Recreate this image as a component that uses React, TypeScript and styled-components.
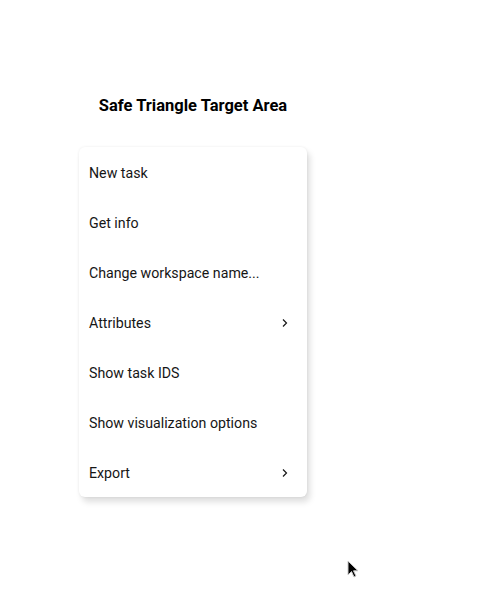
import styled, { createGlobalStyle } from 'styled-components';

const GlobalStyle = createGlobalStyle`
  html, body {
    margin: 0;
    padding: 0;
    background: #ffffff;
  }
  body {
    font-family: Roboto, 'Noto Sans', sans-serif;
    color: #161616;
  }
`;

const items = [
  { label: 'New task' },
  { label: 'Get info' },
  { label: 'Change workspace name...' },
  { label: 'Attributes', sub: true },
  { label: 'Show task IDS' },
  { label: 'Show visualization options' },
  { label: 'Export', sub: true },
];

const Page = styled.div`
  position: relative;
  width: 500px;
  height: 602px;
  padding: 95px 0 0 79px;
  box-sizing: border-box;
  overflow: hidden;
`;

const Column = styled.div`
  width: 228px;
  display: flex;
  flex-direction: column;
  align-items: center;
`;

const Title = styled.h1`
  margin: 0;
  font-size: 16.5px;
  line-height: 22px;
  font-weight: 700;
  color: #000;
  white-space: nowrap;
`;

const Menu = styled.ul`
  list-style: none;
  margin: 30px 0 0;
  padding: 0;
  width: 228px;
  background: #fff;
  border-radius: 6px;
  box-shadow: 3px 5px 6px rgba(0, 0, 0, 0.13), 0 0 3px rgba(0, 0, 0, 0.07);
`;

const Item = styled.li`
  display: flex;
  align-items: center;
  justify-content: space-between;
  height: 50px;
  padding: 1px 17px 0 10px;
  box-sizing: border-box;
  font-size: 14.2px;
  color: #161616;
`;

const Chevron = () => (
  <svg width="10" height="10" viewBox="0 0 10 10" fill="none">
    <path d="M3 1.5 L6.5 5 L3 8.5" stroke="#161616" strokeWidth="1.2" />
  </svg>
);

const Cursor = styled.svg`
  position: absolute;
  left: 347px;
  top: 560px;
`;

const App = () => (
  <>
    <GlobalStyle />
    <Page>
      <Column>
        <Title>Safe Triangle Target Area</Title>
        <Menu>
          {items.map((it) => (
            <Item key={it.label}>
              <span>{it.label}</span>
              {it.sub && <Chevron />}
            </Item>
          ))}
        </Menu>
      </Column>
      <Cursor width="12" height="19" viewBox="0 0 12 19">
        <path d="M1 1 L1 15 L4.5 11.5 L7 17 L9 16 L6.5 10.8 L11 10.8 Z" fill="#000" stroke="#ccc" strokeWidth="1" />
      </Cursor>
    </Page>
  </>
);

export default App;
